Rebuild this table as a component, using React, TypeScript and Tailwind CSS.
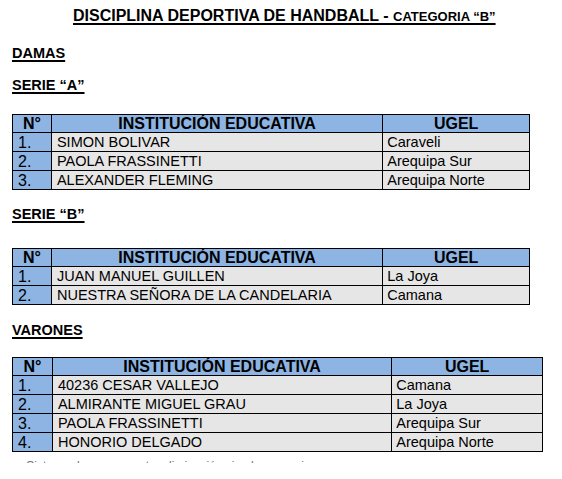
const FONT = { fontFamily: '"Liberation Sans", Arial, sans-serif' }

type Row = [string, string, string]

const serieA: Row[] = [
  ["1.", "SIMON BOLIVAR", "Caraveli"],
  ["2.", "PAOLA FRASSINETTI", "Arequipa Sur"],
  ["3.", "ALEXANDER FLEMING", "Arequipa Norte"],
]

const serieB: Row[] = [
  ["1.", "JUAN MANUEL GUILLEN", "La Joya"],
  ["2.", "NUESTRA SEÑORA DE LA CANDELARIA", "Camana"],
]

const varones: Row[] = [
  ["1.", "40236 CESAR VALLEJO", "Camana"],
  ["2.", "ALMIRANTE MIGUEL GRAU", "La Joya"],
  ["3.", "PAOLA FRASSINETTI", "Arequipa Sur"],
  ["4.", "HONORIO DELGADO", "Arequipa Norte"],
]

function Heading({ children, className }: { children: React.ReactNode; className: string }) {
  return (
    <h2
      className={`ml-[12px] text-[14.5px] font-bold leading-[17px] text-black underline decoration-[1.5px] underline-offset-[2px] ${className}`}
    >
      {children}
    </h2>
  )
}

function Table({ rows, cols, className }: { rows: Row[]; cols: [number, number, number]; className: string }) {
  return (
    <table
      className={`ml-[12px] border-collapse border-[1.5px] border-black text-[14.5px] leading-[16px] text-black ${className}`}
      style={{ width: cols[0] + cols[1] + cols[2] }}
    >
      <colgroup>
        <col style={{ width: cols[0] }} />
        <col style={{ width: cols[1] }} />
        <col style={{ width: cols[2] }} />
      </colgroup>
      <thead>
        <tr className="h-[18px] bg-[#8db4e2] text-[16px] font-bold leading-[16px]">
          <th className="border border-black p-0 text-center">N°</th>
          <th className="border border-black p-0 text-center">INSTITUCIÓN EDUCATIVA</th>
          <th className="border border-black p-0 text-center">UGEL</th>
        </tr>
      </thead>
      <tbody>
        {rows.map((r) => (
          <tr key={r[0]} className="h-[19px]">
            <td className="border border-black bg-[#8db4e2] p-0 pl-[5px] align-bottom text-[16px] leading-[16px]">
              {r[0]}
            </td>
            <td className="border border-black bg-[#e7e6e6] p-0 pl-[5px]">{r[1]}</td>
            <td className="border border-black bg-[#e7e6e6] p-0 pl-[4px]">{r[2]}</td>
          </tr>
        ))}
      </tbody>
    </table>
  )
}

export default function App() {
  return (
    <main className="h-[479px] w-[562px] overflow-hidden bg-white text-black" style={FONT}>
      <h1 className="ml-[73px] pt-[7px] text-[16px] font-bold leading-[18px] underline decoration-[1.5px] underline-offset-[2px]">
        DISCIPLINA DEPORTIVA DE HANDBALL - <span className="text-[13px]">CATEGORIA “B”</span>
      </h1>

      <Heading className="mt-[19px]">DAMAS</Heading>
      <Heading className="mt-[15px]">SERIE “A”</Heading>
      <Table rows={serieA} cols={[39, 332, 147]} className="mt-[20px]" />

      <Heading className="mt-[16px]">SERIE “B”</Heading>
      <Table rows={serieB} cols={[39, 332, 147]} className="mt-[25px]" />

      <Heading className="mt-[17px]">VARONES</Heading>
      <Table rows={varones} cols={[40, 340, 151]} className="mt-[18px]" />

      <div className="ml-[13px] mt-[8px] h-[3px] overflow-hidden text-[12px] leading-[14px] text-gray-500">
        <p className="-mt-[1px]">a. Sistema de campeonato: eliminación simple por series</p>
      </div>
    </main>
  )
}
